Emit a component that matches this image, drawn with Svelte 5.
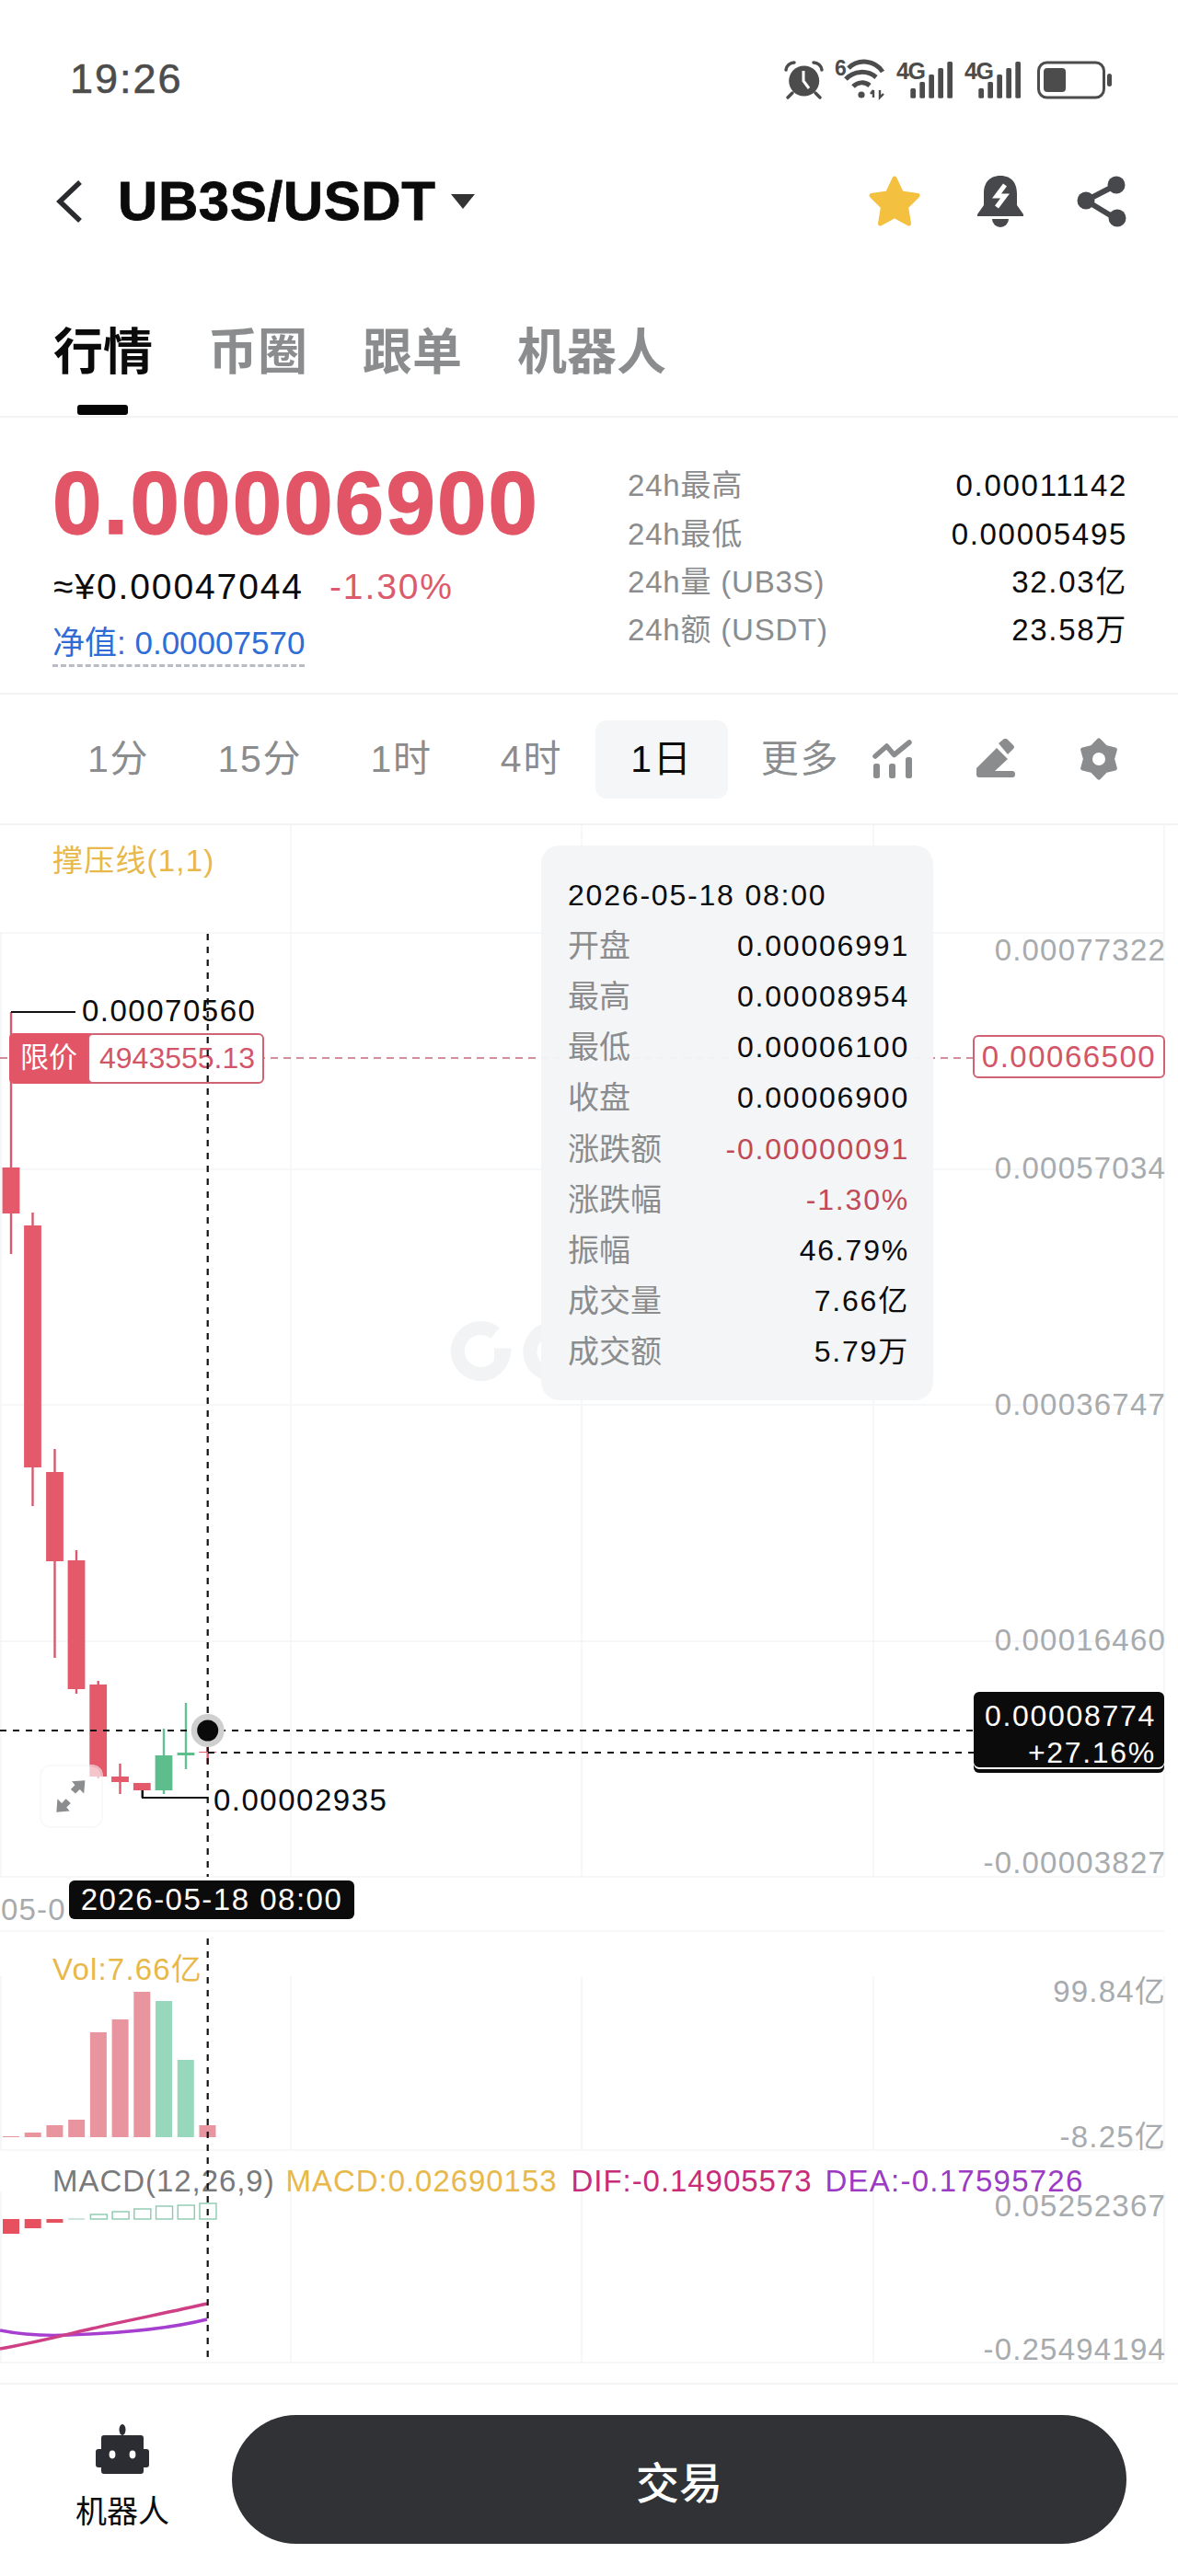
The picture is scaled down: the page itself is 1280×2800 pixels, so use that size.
<script>
  const grid = [316, 632, 949, 1265];
  const hGrid = [1014, 1271, 1527, 1784, 2040];

  const candles = [
    { x: 12, top: 1100, bot: 1363, o: 1269, c: 1319, up: false },
    { x: 35.5, top: 1318, bot: 1637, o: 1332, c: 1595, up: false },
    { x: 59.5, top: 1575, bot: 1802, o: 1600, c: 1697, up: false },
    { x: 83, top: 1685, bot: 1841, o: 1696, c: 1836, up: false },
    { x: 106.7, top: 1827, bot: 1933, o: 1831, c: 1931, up: false },
    { x: 130.5, top: 1917, bot: 1950, o: 1931, c: 1937, up: false },
    { x: 154.3, top: 1938, bot: 1954, o: 1938, c: 1946, up: false },
    { x: 178, top: 1879, bot: 1950, o: 1908, c: 1946, up: true },
    { x: 202, top: 1851, bot: 1923, o: 1905, c: 1908, up: true },
    { x: 225.7, top: 1893, bot: 1917, o: 1904, c: 1905, up: false }
  ];
  const vols = [2322, 2318, 2310, 2304, 2209, 2195, 2165, 2175, 2239, 2310];
  const macd = [2428, 2422, 2416, 2412, 2407, 2404, 2401, 2398, 2397, 2395];

  const axis = [
    { y: 1032, t: '0.00077322' },
    { y: 1269, t: '0.00057034' },
    { y: 1526, t: '0.00036747' },
    { y: 1782, t: '0.00016460' },
    { y: 2024, t: '-0.00003827' },
    { y: 2164, t: '99.84亿' },
    { y: 2322, t: '-8.25亿' },
    { y: 2397, t: '0.05252367' },
    { y: 2553, t: '-0.25494194' }
  ];

  const rows = [
    ['开盘', '0.00006991'],
    ['最高', '0.00008954'],
    ['最低', '0.00006100'],
    ['收盘', '0.00006900'],
    ['涨跌额', '-0.00000091', true],
    ['涨跌幅', '-1.30%', true],
    ['振幅', '46.79%'],
    ['成交量', '7.66亿'],
    ['成交额', '5.79万']
  ];

  const stats = [
    ['24h最高', '0.00011142'],
    ['24h最低', '0.00005495'],
    ['24h量 (UB3S)', '32.03亿'],
    ['24h额 (USDT)', '23.58万']
  ];

  const frames = ['1分', '15分', '1时', '4时', '1日', '更多'];
  const tabs = ['行情', '币圈', '跟单', '机器人'];
  const top = (y) => y - 897;
  const bars4g = [95, 88, 80, 73, 66];
</script>

<div class="page">
  <div class="status">
    <span class="time">19:26</span>
    <svg class="sysicons" width="360" height="50" viewBox="850 60 360 50" fill="#4c4c4c">
      <circle cx="872.7" cy="87" r="16.5" />
      <path d="M872 76v11l6 8" fill="none" stroke="#fff" stroke-width="3" />
      <path d="M853 75a9 9 0 0 1 9-8M892 75a9 9 0 0 0-9-8M860 100l-5 5M885 100l5 5" fill="none" stroke="#4c4c4c" stroke-width="3.5" stroke-linecap="round" />
      <text x="906" y="81" class="st">6</text>
      <path d="M921 73a24 24 0 0 1 37 4M918 85a24 24 0 0 1 33-2M926 93a13 13 0 0 1 18-1" fill="none" stroke="#4c4c4c" stroke-width="5" />
      <circle cx="935" cy="102" r="3.6" />
      <path d="M948 97v8M945 101l3-4M955 97v8l4-4" fill="none" stroke="#4c4c4c" stroke-width="2.4" />
      <text x="973" y="85" class="sg">4G</text>
      {#each bars4g as y, i}
        <rect x={988.3 + i * 10} {y} width="5.7" height={105.7 - y} rx="1.5" />
      {/each}
      <text x="1047" y="85" class="sg">4G</text>
      {#each bars4g as y, i}
        <rect x={1062.3 + i * 10} {y} width="5.7" height={105.7 - y} rx="1.5" />
      {/each}
      <rect x="1127.5" y="67" width="71" height="38" rx="9" fill="none" stroke="#4c4c4c" stroke-width="3" />
      <rect x="1133" y="73" width="24" height="26" rx="4" />
      <rect x="1202" y="79" width="5" height="14" rx="2.5" />
    </svg>
  </div>

  <header class="head">
    <svg class="back" width="30" height="48" viewBox="0 0 30 48" fill="none" stroke="#2a2b2e" stroke-width="5.5">
      <path d="M26 3 4 24l22 21" />
    </svg>
    <h1>UB3S/USDT</h1>
    <span class="caret"></span>
    <div class="actions">
      <svg class="star" width="60" height="58" viewBox="0 0 60 58">
        <path d="M30 4 37.5 20 55 22.5 42.5 35 45.5 53 30 44.5 14.5 53 17.5 35 5 22.5 22.5 20Z" fill="#f4c03f" stroke="#f4c03f" stroke-width="5" stroke-linejoin="round" />
      </svg>
      <svg width="52" height="58" viewBox="0 0 52 58">
        <path d="M26 1C13 1 8 10 8 20v13L1 43v2h50v-2l-7-10V20C44 10 39 1 26 1Z" fill="#47484c" />
        <path d="M17 48h18a9 9 0 0 1-18 0Z" fill="#47484c" />
        <path d="M31 11 22 23h9l-9 12" fill="none" stroke="#fff" stroke-width="5" />
      </svg>
      <svg width="54" height="58" viewBox="0 0 54 58" fill="#47484c">
        <path d="M43 11 10 28l33 20" fill="none" stroke="#47484c" stroke-width="6" />
        <circle cx="43" cy="11" r="9.5" />
        <circle cx="10" cy="28" r="9.5" />
        <circle cx="44" cy="47" r="9.5" />
      </svg>
    </div>
  </header>

  <nav class="tabs">
    {#each tabs as t, i}
      <span class="tab" class:active={i === 0}>{t}</span>
    {/each}
  </nav>

  <section class="price">
    <div class="pl">
      <div class="big">0.00006900</div>
      <div class="sub"><span>≈¥0.00047044</span><span class="neg">-1.30%</span></div>
      <div class="nav">净值: 0.00007570</div>
    </div>
    <div class="pr">
      {#each stats as s}
        <div class="stat"><span>{s[0]}</span><b>{s[1]}</b></div>
      {/each}
    </div>
  </section>

  <div class="frames">
    {#each frames as f}
      <span class="fr" class:on={f === '1日'}>{f}</span>
    {/each}
    <div class="tools">
      <svg width="44" height="44" viewBox="14 25 44 44" fill="#8a8c8e">
        <path d="M17 44 29.5 33l8 9.5L54 29" fill="none" stroke="#8a8c8e" stroke-width="5.5" stroke-linecap="round" stroke-linejoin="round" />
        <rect x="15" y="52" width="7" height="16" rx="2.5" />
        <rect x="32" y="52" width="7" height="16" rx="2.5" />
        <rect x="50" y="45" width="7" height="23" rx="2.5" />
      </svg>
      <svg width="44" height="44" viewBox="125 25 44 44" fill="#8a8c8e">
        <path d="M126 57 148 35 160 47 146 60H165Q168 60 168 63.5T165 67H129Q126 67 126 64Z" />
        <path d="M150 30 156 25Q158 24 160 26L166 32Q168 34 166 36L160 42Z" />
      </svg>
      <svg width="44" height="48" viewBox="-22 -24 44 48">
        <path fill="#8a8c8e" stroke="#8a8c8e" stroke-width="5" stroke-linejoin="round" d="M0-20 7.25-12.56 17.3-10 14.5 0 17.3 10 7.25 12.56 0 20-7.25 12.56-17.3 10-14.5 0-17.3-10-7.25-12.56Z" />
        <circle r="7" fill="#fff" />
      </svg>
    </div>
  </div>

  <div class="chart">
    <svg class="layer" width="1280" height="1693" viewBox="0 897 1280 1693">
      <g stroke="#f3f4f6" stroke-width="1.5">
        {#each grid as x}
          <line x1={x} x2={x} y1="897" y2="2040" />
          <line x1={x} x2={x} y1="2148" y2="2337" />
          <line x1={x} x2={x} y1="2382" y2="2568" />
        {/each}
        {#each hGrid as y}
          <line x1="0" x2="1265" y1={y} y2={y} />
        {/each}
        <line x1="0" x2="1265" y1="2099" y2="2099" />
        <line x1="0" x2="1265" y1="2337" y2="2337" />
        <line x1="0" x2="1265" y1="2568" y2="2568" />
        <line x1="1" x2="1" y1="1014" y2="2040" />
        <line x1="1" x2="1" y1="2148" y2="2337" />
        <line x1="1" x2="1" y1="2382" y2="2568" />
      </g>

      <g fill="none" stroke="#f2f3f4" stroke-width="15">
        <path d="M538 1449a25 25 0 1 0 9 24h-10" />
        <path d="M617 1450a25 25 0 1 0 8 26" />
        <path d="M690 1450a25 25 0 1 0 1 0" />
      </g>

      {#each candles as c}
        <line x1={c.x} x2={c.x} y1={c.top} y2={c.bot} stroke={c.up ? '#62c092' : '#d9596d'} stroke-width="2.4" />
        <rect x={c.x - 9.4} y={c.o} width="18.8" height={c.c - c.o} fill={c.up ? '#5dbd8d' : '#e45a6b'} />
      {/each}

      {#each vols as y, i}
        <rect x={3 + i * 23.72} {y} width="18" height={2323 - y} fill={i === 7 || i === 8 ? '#97d8bc' : '#e9959f'} />
      {/each}

      {#each macd as y, i}
        {#if i < 3}
          <rect x={3 + i * 23.72} y="2412" width="18" height={y - 2412} fill="#e6505f" />
        {:else if i === 3}
          <rect x={3 + i * 23.72} y="2411" width="18" height="2" fill="#cfe6dc" />
        {:else}
          <rect x={3.5 + i * 23.72} {y} width="18" height={2412 - y} fill="none" stroke="#8cc9b0" stroke-width="1.4" />
        {/if}
      {/each}

      <path d="M0 2533C25 2538 50 2539 75 2538S170 2535 225 2521" fill="none" stroke="#a63ed0" stroke-width="3.4" />
      <path d="M0 2553C40 2546 70 2538 100 2531S190 2512 225 2504" fill="none" stroke="#cf3f86" stroke-width="3.4" />

      <path d="M12 1100H82" fill="none" stroke="#111" stroke-width="2" />
      <path d="M155 1946V1954H225" fill="none" stroke="#111" stroke-width="2" />
      <line x1="0" x2="1057" y1="1150" y2="1150" stroke="#c56a7c" stroke-width="1.6" stroke-dasharray="8 6" />
    </svg>

    <div class="watch">
      <svg viewBox="0 0 66 66" fill="#8b8d8f">
        <path d="M33 4 58 2 56 27 48 19 40 27 31 19 39 11ZM4 62 6 37 14 45 22 37 31 45 23 53 29 60Z" />
      </svg>
    </div>

    {#each axis as a}
      <span class="axis" style="top:{top(a.y)}px">{a.t}</span>
    {/each}

    <div class="ind yl" style="top:{top(935)}px">撑压线(1,1)</div>
    <div class="ind yl" style="top:{top(2140)}px">Vol:7.66亿</div>
    <div class="legend" style="top:{top(2370)}px">
      <span class="g">MACD(12,26,9)</span>
      <span class="yl">MACD:0.02690153</span>
      <span class="dif">DIF:-0.14905573</span>
      <span class="dea">DEA:-0.17595726</span>
    </div>

    <span class="mark hi">0.00070560</span>
    <span class="mark lo">0.00002935</span>

    <div class="limit">
      <span class="lk">限价</span>
      <span class="lv">4943555.13</span>
    </div>
    <span class="cur">0.00066500</span>
    <span class="xdate">05-0</span>

    <aside class="tip">
      <div class="trow date">2026-05-18 08:00</div>
      {#each rows as r}
        <div class="trow"><span class="tk">{r[0]}</span><span class="tv" class:tn={r[2]}>{r[1]}</span></div>
      {/each}
    </aside>

    <svg class="layer" width="1280" height="1693" viewBox="0 897 1280 1693">
      <g stroke="#111" stroke-width="2.2" stroke-dasharray="7 7" fill="none">
        <line x1="225.7" x2="225.7" y1="1015" y2="2040" />
        <line x1="225.7" x2="225.7" y1="2107" y2="2568" />
        <line x1="0" x2="1060" y1="1881" y2="1881" />
        <line x1="226" x2="1060" y1="1905" y2="1905" />
      </g>
      <circle cx="225.7" cy="1881" r="18" fill="#cfcfcf" />
      <circle cx="225.7" cy="1881" r="11.5" fill="#0a0a0a" />
    </svg>

    <div class="cross">
      <span>0.00008774</span>
      <span>+27.16%</span>
    </div>
    <span class="ttag">2026-05-18 08:00</span>
  </div>

  <footer class="foot">
    <div class="bot">
      <svg width="60" height="56" viewBox="0 0 60 56" fill="#2b2d33">
        <ellipse cx="30" cy="6" rx="3.5" ry="6" />
        <rect x="7" y="12" width="46" height="42" rx="3" />
        <rect x="1" y="27" width="58" height="20" rx="3" />
        <ellipse cx="19" cy="33" rx="3.4" ry="4.4" fill="#fff" />
        <ellipse cx="41" cy="33" rx="3.4" ry="4.4" fill="#fff" />
      </svg>
      <span>机器人</span>
    </div>
    <button class="trade">交易</button>
  </footer>
</div>

<style>
  :global(body) {
    margin: 0;
    background: #fff;
  }
  .page {
    width: 1280px;
    height: 2800px;
    overflow: hidden;
    font-family: "Liberation Sans", "Noto Sans CJK SC", sans-serif;
    color: #0b0b0b;
    background: #fff;
  }
  .status {
    box-sizing: border-box;
    height: 132px;
    padding: 40px 69px 0 76px;
    display: flex;
    align-items: center;
    justify-content: space-between;
  }
  .time {
    font-size: 45px;
    letter-spacing: 2px;
    color: #4c4c4c;
    -webkit-text-stroke: 0.6px #4c4c4c;
  }
  .sysicons {
    display: block;
  }
  .st {
    font: 700 23px "Liberation Sans", sans-serif;
  }
  .sg {
    font: 700 25px "Liberation Sans", sans-serif;
    letter-spacing: -1.5px;
  }
  .head {
    box-sizing: border-box;
    height: 172px;
    padding: 2px 56px 0 61px;
    display: flex;
    align-items: center;
  }
  .back {
    margin-right: 37px;
  }
  h1 {
    margin: 0;
    font-size: 60px;
    line-height: 1;
    font-weight: 700;
    letter-spacing: 0.6px;
    -webkit-text-stroke: 0.8px #0b0b0b;
  }
  .caret {
    margin-left: 17px;
    border: 13px solid transparent;
    border-top: 16px solid #333;
    border-bottom: 0;
  }
  .actions {
    margin-left: auto;
    display: flex;
    align-items: center;
    gap: 57px;
  }
  .star {
    margin-right: 2px;
  }
  .tabs {
    box-sizing: border-box;
    height: 150px;
    padding: 9px 0 0 58px;
    display: flex;
    align-items: center;
    gap: 60px;
    border-bottom: 2px solid #f2f3f5;
  }
  .tab {
    position: relative;
    font-size: 54px;
    line-height: 54px;
    font-weight: 700;
    color: #8a8c8e;
  }
  .active {
    color: #0b0b0b;
  }
  .active::after {
    content: "";
    position: absolute;
    left: 26px;
    width: 55px;
    height: 11px;
    bottom: -41px;
    border-radius: 3px;
    background: #050505;
  }
  .price {
    box-sizing: border-box;
    height: 301px;
    padding: 45px 55px 0 57px;
    display: flex;
    justify-content: space-between;
    border-bottom: 2px solid #f2f3f5;
  }
  .big {
    margin-top: -7px;
    font-size: 96px;
    line-height: 110px;
    font-weight: 700;
    letter-spacing: 2.2px;
    color: #e25567;
    -webkit-text-stroke: 1.4px #e25567;
  }
  .sub {
    margin-top: 13px;
    padding-left: 1px;
    font-size: 39px;
    line-height: 46px;
    letter-spacing: 1.9px;
    display: flex;
    gap: 28px;
  }
  .neg {
    color: #dc5a6c;
  }
  .nav {
    display: inline-block;
    margin-top: 16px;
    padding-bottom: 1px;
    font-size: 35px;
    line-height: 44px;
    color: #2f6cd6;
    border-bottom: 3px dashed #b9bcc4;
  }
  .pr {
    width: 543px;
    margin-top: 3px;
  }
  .stat {
    height: 52.4px;
    line-height: 40px;
    display: flex;
    align-items: center;
    justify-content: space-between;
    font-size: 33px;
    letter-spacing: 0.8px;
    color: #8a8c8e;
  }
  .stat b {
    font-weight: 400;
    color: #0b0b0b;
    letter-spacing: 1.7px;
  }
  .frames {
    box-sizing: border-box;
    height: 142px;
    padding-left: 95px;
    display: flex;
    align-items: center;
    gap: 74px;
    font-size: 41px;
    letter-spacing: 1.8px;
    color: #8a8c8e;
    border-bottom: 2px solid #f2f3f5;
  }
  .fr {
    line-height: 85px;
    white-space: nowrap;
  }
  .on {
    padding: 0 38px;
    margin: 0 -38px;
    border-radius: 12px;
    background: #f5f6f8;
    color: #0b0b0b;
  }
  .tools {
    margin-left: -38px;
    display: flex;
    align-items: center;
    gap: 68px;
  }
  .chart {
    position: relative;
    height: 1693px;
    font-size: 33px;
    letter-spacing: 1.2px;
  }
  .layer {
    position: absolute;
    left: 0;
    top: 0;
  }
  .axis {
    position: absolute;
    right: 13px;
    line-height: 1;
    transform: translateY(-50%);
    color: #a8abad;
    white-space: nowrap;
  }
  .ind,
  .legend {
    position: absolute;
    left: 57px;
    line-height: 1;
    transform: translateY(-50%);
    white-space: nowrap;
  }
  .legend {
    display: flex;
    gap: 12px;
    letter-spacing: 0.95px;
  }
  .yl {
    color: #e8b84a;
  }
  .g {
    color: #77797b;
  }
  .dif {
    margin-left: 3px;
    color: #c72c7a;
  }
  .dea {
    margin-left: 2px;
    letter-spacing: 1.25px;
    color: #9b3bc4;
  }
  .mark {
    position: absolute;
    line-height: 1;
    white-space: nowrap;
    letter-spacing: 1.5px;
  }
  .hi {
    left: 89px;
    top: 185px;
  }
  .lo {
    left: 232px;
    top: 1043px;
  }
  .limit {
    position: absolute;
    left: 10px;
    top: 226px;
    height: 55px;
    display: flex;
    line-height: 51px;
    white-space: nowrap;
    letter-spacing: 0;
  }
  .lk {
    width: 90px;
    padding-right: 4px;
    box-sizing: border-box;
    text-align: center;
    background: #e25567;
    color: #fff;
    font-size: 31px;
    line-height: 53px;
    border-radius: 5px 0 0 5px;
  }
  .lv {
    box-sizing: border-box;
    width: 192px;
    margin-left: -5px;
    padding-left: 11px;
    color: #d2556a;
    background: #fff;
    border: 2px solid #cf6374;
    border-radius: 6px;
    font-size: 32px;
  }
  .cur {
    position: absolute;
    left: 1057px;
    top: 228px;
    box-sizing: border-box;
    width: 209px;
    height: 47px;
    line-height: 43px;
    text-align: center;
    color: #d2556a;
    background: #fff;
    border: 2px solid #cf6374;
    border-radius: 6px;
    letter-spacing: 1.5px;
  }
  .xdate {
    position: absolute;
    left: 1px;
    top: 1162px;
    line-height: 1;
    color: #a8abad;
  }
  .tip {
    position: absolute;
    left: 588px;
    top: 22px;
    box-sizing: border-box;
    width: 426px;
    height: 603px;
    padding: 26px 26px 0 29px;
    border-radius: 20px;
    background: rgba(244, 245, 247, 0.96);
    font-size: 32px;
    letter-spacing: 1.8px;
  }
  .trow {
    height: 55.2px;
    line-height: 40px;
    display: flex;
    align-items: center;
    justify-content: space-between;
    white-space: nowrap;
  }
  .tk {
    color: #8a8c8e;
    font-size: 34px;
    letter-spacing: 0;
  }
  .tn {
    color: #c04a56;
  }
  .watch {
    position: absolute;
    left: 45px;
    top: 1023px;
    width: 65px;
    height: 65px;
    display: flex;
    align-items: center;
    justify-content: center;
    border-radius: 10px;
    background: rgba(255, 255, 255, 0.65);
    box-shadow: 0 0 0 2px rgba(245, 245, 245, 0.6);
  }
  .watch svg {
    width: 38px;
    height: 38px;
  }
  .cross {
    position: absolute;
    left: 1058px;
    top: 942px;
    box-sizing: border-box;
    width: 207px;
    height: 88px;
    padding: 6px 9px 0;
    display: flex;
    flex-direction: column;
    align-items: flex-end;
    background: #0b0b0b;
    color: #fff;
    border-radius: 6px;
    line-height: 40px;
    font-size: 32px;
    letter-spacing: 1.7px;
    box-shadow: inset 0 -4px 0 #0b0b0b, inset 0 -6px 0 #fff;
  }
  .ttag {
    position: absolute;
    left: 75px;
    top: 1147px;
    box-sizing: border-box;
    width: 310px;
    height: 42px;
    line-height: 42px;
    text-align: center;
    background: #0b0b0b;
    color: #fff;
    border-radius: 6px;
    letter-spacing: 1.5px;
    white-space: nowrap;
  }
  .foot {
    box-sizing: border-box;
    height: 210px;
    padding: 33px 56px 0 0;
    display: flex;
    align-items: flex-start;
    border-top: 2px solid #f2f3f5;
  }
  .bot {
    box-sizing: border-box;
    width: 252px;
    padding: 10px 0 0 14px;
    display: flex;
    flex-direction: column;
    align-items: center;
    gap: 22px;
    font-size: 34px;
    line-height: 1;
    color: #0b0b0b;
  }
  .trade {
    flex: 1;
    height: 140px;
    border: 0;
    border-radius: 70px;
    background: #303235;
    color: #fff;
    font: 500 47px "Liberation Sans", "Noto Sans CJK SC", sans-serif;
  }
</style>
